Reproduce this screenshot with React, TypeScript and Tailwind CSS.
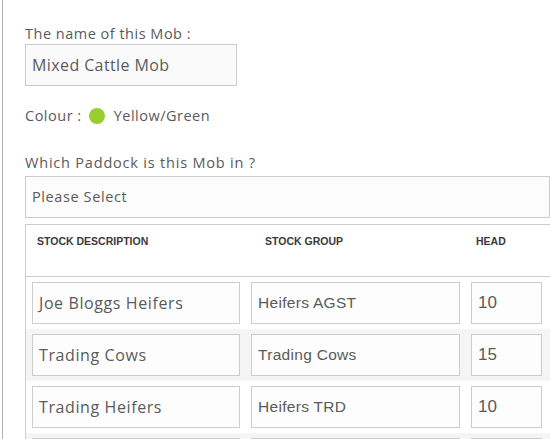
import React from "react";

const rows = [
  { desc: "Joe Bloggs Heifers", group: "Heifers AGST", head: "10" },
  { desc: "Trading Cows", group: "Trading Cows", head: "15" },
  { desc: "Trading Heifers", group: "Heifers TRD", head: "10" },
  { desc: "", group: "", head: "" },
];

export default function App() {
  return (
    <div className="h-[439px] w-[550px] overflow-hidden bg-white">
      <div
        className="ml-[2px] h-full border-l border-[#b3b3b3] pl-[22px] pt-[24px] text-[#5a5a5a]"
        style={{ fontFamily: '"Open Sans", "Liberation Sans", sans-serif' }}
      >
        {/* Mob name */}
        <div className="text-[14.5px] leading-[20px] tracking-[0.5px]">The name of this Mob :</div>
        <div className="flex h-[42px] w-[212px] items-center border border-[#cccccc] bg-[#fafafa] px-[6px] text-[16px] tracking-[0.4px]">
          Mixed Cattle Mob
        </div>

        {/* Colour */}
        <div className="mt-[20px] flex items-center text-[14.5px] leading-[20px] tracking-[0.5px]">
          <span>Colour :</span>
          <span className="ml-[7px] h-[16px] w-[16px] rounded-full bg-[#9acd32]" />
          <span className="ml-[9px]">Yellow/Green</span>
        </div>

        {/* Paddock */}
        <div className="mt-[27px] text-[14.5px] leading-[20px] tracking-[0.8px]">Which Paddock is this Mob in ?</div>
        <div className="mt-[3px] flex h-[42px] w-[525px] items-center border border-[#cccccc] bg-[#fcfcfc] px-[6px] text-[14.5px] tracking-[0.6px]">
          Please Select
        </div>

        {/* Stock table */}
        <div className="mt-[6px] w-[526px] border-l border-t border-[#cccccc]">
          <div
            className="flex h-[52px] border-b border-[#cccccc] pt-[9px] text-[10.5px] font-semibold leading-[14px] text-[#3a3a3a]"
            style={{ fontFamily: '"Liberation Sans", Arial, sans-serif' }}
          >
            <div className="w-[239px] pl-[11px]">STOCK DESCRIPTION</div>
            <div className="w-[211px]">STOCK GROUP</div>
            <div>HEAD</div>
          </div>
          {rows.map((r, i) => (
            <div
              key={i}
              className={`flex h-[52px] items-center pl-[6px] ${i % 2 === 1 ? "bg-[#f5f5f5]" : "bg-white"}`}
            >
              <div className="flex h-[42px] w-[208px] items-center border border-[#cccccc] bg-[#fdfdfd] px-[6px] text-[16px] tracking-[0.6px]">
                {r.desc}
              </div>
              <div
                className="ml-[11px] flex h-[42px] w-[209px] items-center border border-[#cccccc] bg-[#fdfdfd] px-[6px] text-[15.5px] tracking-[0.3px]"
                style={{ fontFamily: '"Liberation Sans", Arial, sans-serif' }}
              >
                {r.group}
              </div>
              <div
                className="ml-[11px] flex h-[42px] w-[71px] items-center border border-[#cccccc] bg-[#fdfdfd] px-[6px] text-[17px]"
                style={{ fontFamily: '"Liberation Sans", Arial, sans-serif' }}
              >
                {r.head}
              </div>
            </div>
          ))}
        </div>
      </div>
    </div>
  );
}
